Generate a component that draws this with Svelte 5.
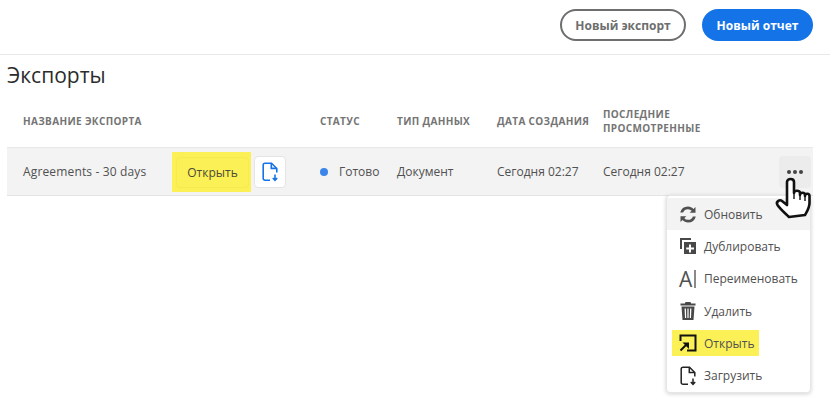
<script lang="ts">
  const menu = [
    { id: "refresh", label: "Обновить" },
    { id: "copy", label: "Дублировать" },
    { id: "rename", label: "Переименовать" },
    { id: "trash", label: "Удалить" },
    { id: "open", label: "Открыть" },
    { id: "download", label: "Загрузить" },
  ];
</script>

<div class="page">
  <header class="topbar">
    <button class="btn outline">Новый экспорт</button>
    <button class="btn primary">Новый отчет</button>
  </header>

  <main class="content">
    <h1>Экспорты</h1>

    <div class="table">
      <div class="row head">
        <div class="name">Название экспорта</div>
        <div>Статус</div>
        <div>Тип данных</div>
        <div>Дата создания</div>
        <div class="last-viewed">Последние просмотренные</div>
      </div>
      <div class="row body">
        <div class="name name-cell">
          <span class="name-text">Agreements - 30 days</span>
          <span class="marker"><button class="open">Открыть</button></span>
          <button class="dl" aria-label="Загрузить">
            <svg width="16" height="20" viewBox="0 0 16 20" fill="none" stroke="#1473e6" stroke-width="1.6">
              <path d="M8 18.2H3a1.8 1.8 0 0 1-1.8-1.8V3A1.8 1.8 0 0 1 3 1.2h6.5L14.8 6.5v4" />
              <path d="M9.3 1.4v5h5" />
              <path d="M13 12.5v5.5M10.8 16l2.2 2.4 2.2-2.4" />
            </svg>
          </button>
        </div>
        <div class="status"><i class="dot"></i>Готово</div>
        <div>Документ</div>
        <div>Сегодня 02:27</div>
        <div>Сегодня 02:27</div>
        <div class="more"><span class="dots"><b></b><b></b><b></b></span></div>
      </div>
    </div>
  </main>

  <ul class="menu">
    {#each menu as item}
      <li class:hover={item.id === "refresh"}>
        <span class="item-inner" class:mark={item.id === "open"}>
          <span class="ico">
            {#if item.id === "refresh"}
              <svg width="18" height="17" viewBox="0 0 18 17" fill="#505050">
                <path d="M9 .5c2.200 0 4.100 .9 5.500 2.400L16.500 1v5.800h-5.800l2-2A5 5 0 0 0 9 3.200a5.200 5.200 0 0 0-4.900 3.400H1.200A8 8 0 0 1 9 .5z" />
                <path d="M9 16.500c-2.200 0-4.100-.9-5.500-2.400L1.500 16v-5.800h5.800l-2 2A5 5 0 0 0 9 13.800a5.200 5.200 0 0 0 4.900-3.400h2.900A8 8 0 0 1 9 16.500z" />
              </svg>
            {:else if item.id === "copy"}
              <svg width="18" height="18" viewBox="0 0 18 18" fill="#484848">
                <path d="M1 1h11v2H3v9H1z" />
                <path fill-rule="evenodd" d="M5 5h12v12H5zM10 7.500v3H7.200v2H10v3h2v-3h3v-2h-3v-3z" />
              </svg>
            {:else if item.id === "rename"}
              <span class="rename"><span>A</span><i></i></span>
            {:else if item.id === "trash"}
              <svg width="16" height="18" viewBox="0 0 16 18" fill="#484848">
                <path d="M5.500 0h5l.6 1.500H15.500v2H.5v-2h4.400z" />
                <path fill-rule="evenodd" d="M1.500 4.500h13l-1 13.500h-11zM4.600 6.500l.4 9.500h1.200l-.3-9.500zM7.400 6.500v9.500h1.200V6.500zM10.100 6.500l-.3 9.500H11l.4-9.500z" />
              </svg>
            {:else if item.id === "open"}
              <svg width="18" height="18" viewBox="0 0 18 18" fill="none" stroke="#111" stroke-width="2">
                <path d="M1.500 7V1.500h15v15H8" />
                <path d="M1.500 16.500 7 11" />
                <path d="M3.500 8.500h6.500V15z" fill="#111" stroke="none" />
              </svg>
            {:else}
              <svg width="16" height="20" viewBox="0 0 16 20" fill="none" stroke="#222" stroke-width="1.500">
                <path d="M8 18.200H3a1.800 1.800 0 0 1-1.800-1.800V3A1.800 1.800 0 0 1 3 1.200h6.500l5.300 5.300v4" />
                <path d="M9.300 1.400v5h5" />
                <path d="M13 12.500v5.500M10.800 16l2.200 2.400 2.200-2.400" />
              </svg>
            {/if}
          </span>
          <span class="label">{item.label}</span>
        </span>
      </li>
    {/each}
  </ul>

  <svg class="cursor" width="38" height="44" viewBox="0 0 38 44">
    <path
      d="M13 29V6c0-4 7-4 7 0v11c0-3 6-3 6 0v2c0-3 5-3 5 0v1c0-3 4.500-3 4.500 0v7c0 5-2.500 8.500-4.500 12l-16 2C11 37 7 34 3.500 29c-2-3 2-6 4.500-4z"
      fill="#fff"
      stroke="#111"
      stroke-width="2.600"
      stroke-linejoin="round"
    />
    <path d="M20 17v6M26 19v5M31 20v5" stroke="#111" stroke-width="1.400" fill="none" />
  </svg>
</div>

<style>
  :global(body) {
    margin: 0;
    background: #fff;
  }

  .page {
    position: relative;
    width: 830px;
    height: 416px;
    overflow: hidden;
    font-family: "Open Sans", "Noto Sans", sans-serif;
    color: #4b4b4b;
  }

  .topbar {
    height: 55px;
    box-sizing: border-box;
    border-bottom: 1px solid #e8e8e8;
    display: flex;
    justify-content: flex-end;
    align-items: flex-start;
    gap: 16px;
    padding: 9px 17px 0 0;
  }

  .btn {
    height: 32px;
    border-radius: 16px;
    font-family: inherit;
    font-size: 12px;
    font-weight: 700;
    padding: 0;
  }

  .outline {
    width: 126px;
    background: #fff;
    border: 2px solid #6e6e6e;
    color: #6e6e6e;
  }

  .primary {
    width: 111px;
    background: #1473e6;
    border: 0;
    color: #fff;
  }

  .content {
    padding: 0 17px 0 7px;
  }

  h1 {
    margin: 0;
    height: 40px;
    font-size: 21px;
    font-weight: 400;
    line-height: 40px;
    color: #2c2c2c;
  }

  .row {
    display: grid;
    grid-template-columns: 313px 77px 100px 106px 1fr 32px;
    align-items: center;
  }

  .head {
    height: 53px;
    box-sizing: border-box;
    font-size: 10px;
    font-weight: 700;
    letter-spacing: 0.35px;
    line-height: 14px;
    text-transform: uppercase;
    color: #747474;
    border-bottom: 1px solid #e8e8e8;
  }

  .last-viewed {
    max-width: 120px;
  }

  .body {
    height: 48px;
    box-sizing: border-box;
    background: #f3f3f3;
    border-bottom: 1px solid #e4e4e4;
    font-size: 12px;
    color: #505050;
  }

  .name {
    padding-left: 16px;
  }

  .name-cell {
    display: flex;
    align-items: center;
  }

  .name-text {
    width: 149px;
    letter-spacing: 0.15px;
    white-space: nowrap;
  }

  .marker {
    display: flex;
    background: #fbf056;
    padding: 5px 2px 4px 4px;
    margin-right: 3px;
  }

  .open {
    width: 73px;
    height: 31px;
    border: 1px solid #f5ea50;
    border-radius: 4px;
    background: #fbf056;
    font-family: inherit;
    font-size: 12px;
    color: #4b4b3a;
    padding: 0;
  }

  .dl {
    width: 32px;
    height: 32px;
    border: 1px solid #e4e4e4;
    border-radius: 4px;
    background: #fff;
    display: flex;
    align-items: center;
    justify-content: center;
    padding: 0;
  }

  .status {
    display: flex;
    align-items: center;
  }

  .dot {
    width: 8px;
    height: 8px;
    border-radius: 50%;
    background: #3b84e8;
    margin-right: 11px;
  }

  .more {
    width: 32px;
    height: 32px;
    margin-left: -2px;
    border-radius: 4px;
    background: #ececec;
    display: flex;
    align-items: center;
    justify-content: center;
  }

  .dots {
    display: flex;
    gap: 2px;
  }

  .dots b {
    width: 4px;
    height: 4px;
    border-radius: 50%;
    background: #444;
  }

  .menu {
    position: absolute;
    left: 666px;
    top: 195px;
    width: 145px;
    height: 198px;
    box-sizing: border-box;
    margin: 0;
    padding: 2px 0;
    list-style: none;
    background: #fff;
    border: 1px solid #e6e6e6;
    border-radius: 4px;
    box-shadow: 0 1px 4px rgba(0, 0, 0, 0.18);
    font-size: 12px;
    color: #505050;
  }

  .menu li {
    height: 32.3px;
    display: flex;
    align-items: center;
    padding-left: 5px;
  }

  .menu li.hover {
    background: #f3f3f3;
  }

  .item-inner {
    display: flex;
    align-items: center;
    height: 26px;
    padding-right: 5px;
  }

  .item-inner.mark {
    background: #fbf056;
  }

  .ico {
    width: 31px;
    display: flex;
    justify-content: center;
    margin-right: 1px;
  }

  .rename {
    display: flex;
    align-items: center;
    gap: 2px;
    font-size: 21px;
    line-height: 20px;
    color: #505050;
  }

  .rename i {
    width: 1.5px;
    height: 18px;
    background: #8a8a8a;
  }

  .cursor {
    position: absolute;
    left: 774px;
    top: 176px;
  }
</style>
